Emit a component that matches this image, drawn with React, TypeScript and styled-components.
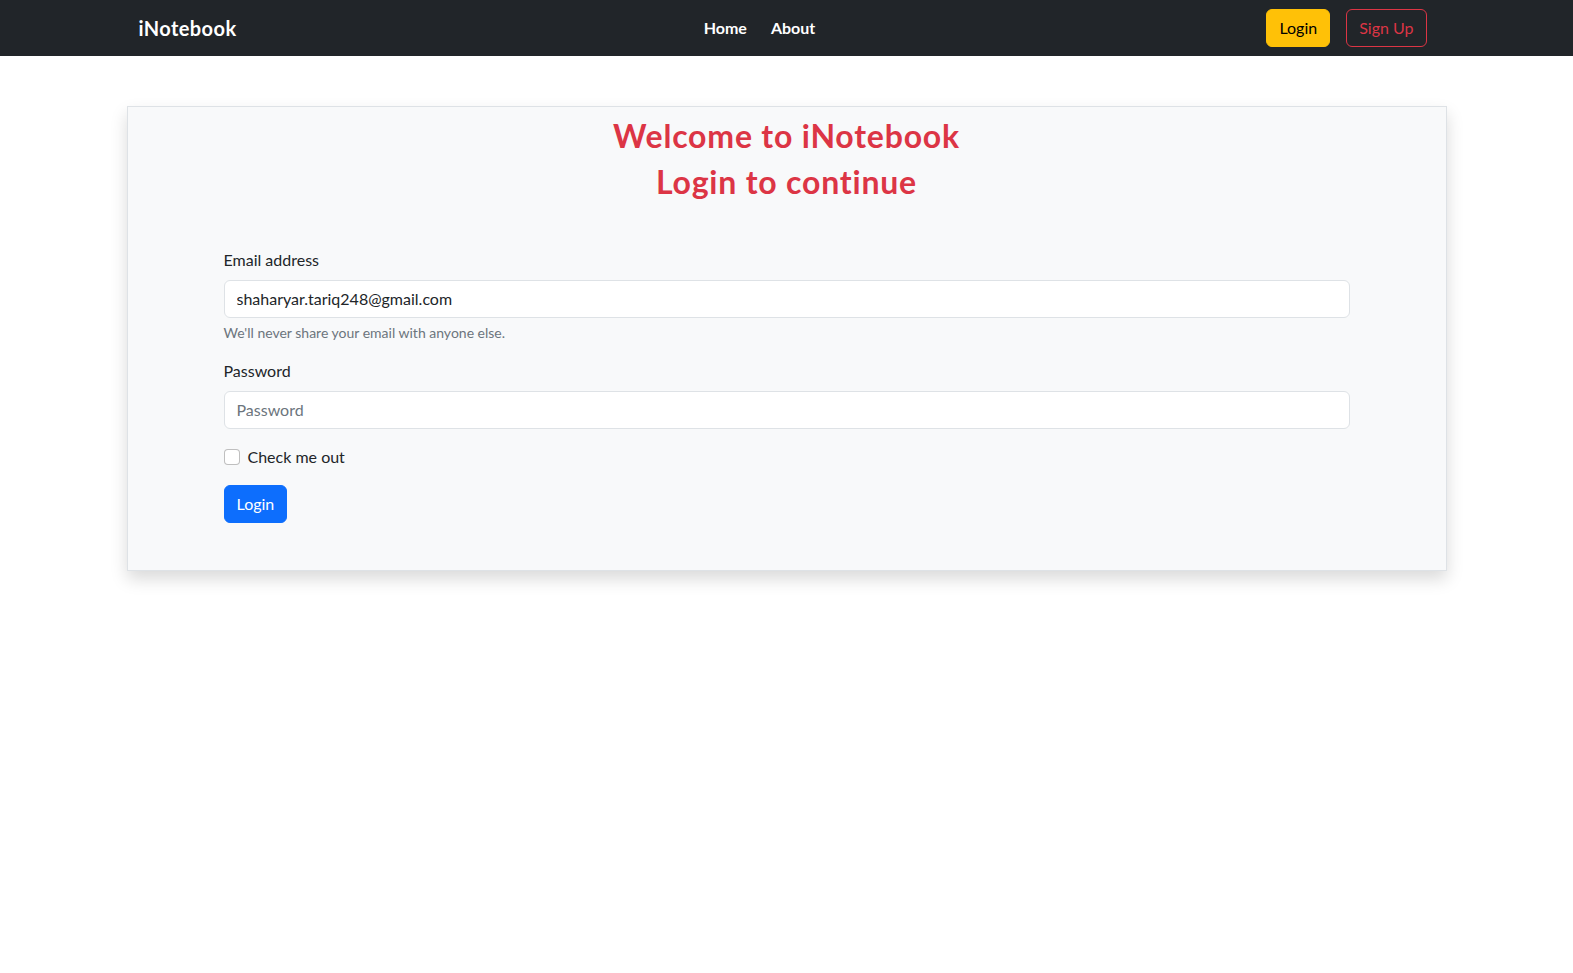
import React from 'react';
import styled, { createGlobalStyle } from 'styled-components';

const GlobalStyle = createGlobalStyle`
  * { box-sizing: border-box; }
  body {
    margin: 0;
    font-family: Lato, "Noto Sans", "Liberation Sans", sans-serif;
    font-size: 16px;
    line-height: 1.5;
    color: #212529;
    background: #fff;
  }
`;

const Navbar = styled.nav`
  background: #212529;
  height: 56px;
`;

const NavInner = styled.div`
  width: 1320px;
  margin: 0 auto;
  padding: 0 12px;
  height: 100%;
  display: flex;
  align-items: center;
`;

const Brand = styled.a`
  color: #fff;
  font-size: 20px;
  font-weight: 700;
  letter-spacing: 0.4px;
  text-decoration: none;
  margin-right: 16px;
  padding: 5px 0;
`;

const NavLinks = styled.ul`
  list-style: none;
  margin: 0 auto;
  padding: 0;
  display: flex;
  gap: 8px;
`;

const NavLink = styled.a`
  color: #fff;
  font-weight: 700;
  font-size: 16px;
  text-decoration: none;
  padding: 8px;
  display: block;
`;

const Actions = styled.div`
  display: flex;
  gap: 16px;
  margin-right: 8px;
`;

const Btn = styled.button<{ $variant: 'warning' | 'outline-danger' | 'primary' }>`
  font-family: inherit;
  font-size: 16px;
  line-height: 24px;
  padding: 6px 12px;
  border-radius: 6px;
  cursor: pointer;
  border: 1px solid
    ${p => (p.$variant === 'warning' ? '#ffc107' : p.$variant === 'primary' ? '#0d6efd' : '#dc3545')};
  background: ${p => (p.$variant === 'warning' ? '#ffc107' : p.$variant === 'primary' ? '#0d6efd' : 'transparent')};
  color: ${p => (p.$variant === 'warning' ? '#000' : p.$variant === 'primary' ? '#fff' : '#dc3545')};
`;

const Page = styled.main`
  width: 1320px;
  margin: 50px auto 0;
  padding-bottom: 80px;
`;

const Card = styled.section`
  background: #f8f9fa;
  border: 1px solid #dee2e6;
  box-shadow: 0 8px 16px rgba(0, 0, 0, 0.15);
  padding: 10px 96px 47px;
`;

const Title = styled.h2`
  margin: 0 0 8px;
  text-align: center;
  color: #dc3545;
  font-size: 32px;
  font-weight: 700;
  letter-spacing: 0.8px;
  line-height: 1.2;
`;

const Form = styled.form`
  margin-top: 46px;
`;

const Field = styled.div`
  margin-bottom: 16px;
`;

const Label = styled.label`
  display: block;
  margin-bottom: 8px;
`;

const Input = styled.input`
  display: block;
  width: 100%;
  height: 38px;
  padding: 6px 12px;
  font-family: inherit;
  font-size: 16px;
  line-height: 24px;
  color: #212529;
  background: #fff;
  border: 1px solid #dee2e6;
  border-radius: 6px;
  outline: none;
  &::placeholder { color: #6c757d; }
`;

const Help = styled.div`
  margin-top: 4px;
  font-size: 14px;
  color: #6c757d;
`;

const CheckRow = styled.div`
  display: flex;
  align-items: center;
  gap: 8px;
  min-height: 24px;
  margin-bottom: 16px;
`;

const CheckBox = styled.span`
  width: 16px;
  height: 16px;
  border: 1px solid rgba(0, 0, 0, 0.25);
  border-radius: 4px;
  background: #fff;
`;

export default function App() {
  return (
    <>
      <GlobalStyle />
      <Navbar>
        <NavInner>
          <Brand href="#">iNotebook</Brand>
          <NavLinks>
            <li><NavLink href="#">Home</NavLink></li>
            <li><NavLink href="#">About</NavLink></li>
          </NavLinks>
          <Actions>
            <Btn $variant="warning">Login</Btn>
            <Btn $variant="outline-danger">Sign Up</Btn>
          </Actions>
        </NavInner>
      </Navbar>
      <Page>
        <Card>
          <Title>Welcome to iNotebook</Title>
          <Title>Login to continue</Title>
          <Form onSubmit={e => e.preventDefault()}>
            <Field>
              <Label htmlFor="email">Email address</Label>
              <Input id="email" type="email" defaultValue="shaharyar.tariq248@gmail.com" />
              <Help>We'll never share your email with anyone else.</Help>
            </Field>
            <Field>
              <Label htmlFor="password">Password</Label>
              <Input id="password" type="password" placeholder="Password" />
            </Field>
            <CheckRow>
              <CheckBox />
              <span>Check me out</span>
            </CheckRow>
            <Btn $variant="primary" type="submit">Login</Btn>
          </Form>
        </Card>
      </Page>
    </>
  );
}
